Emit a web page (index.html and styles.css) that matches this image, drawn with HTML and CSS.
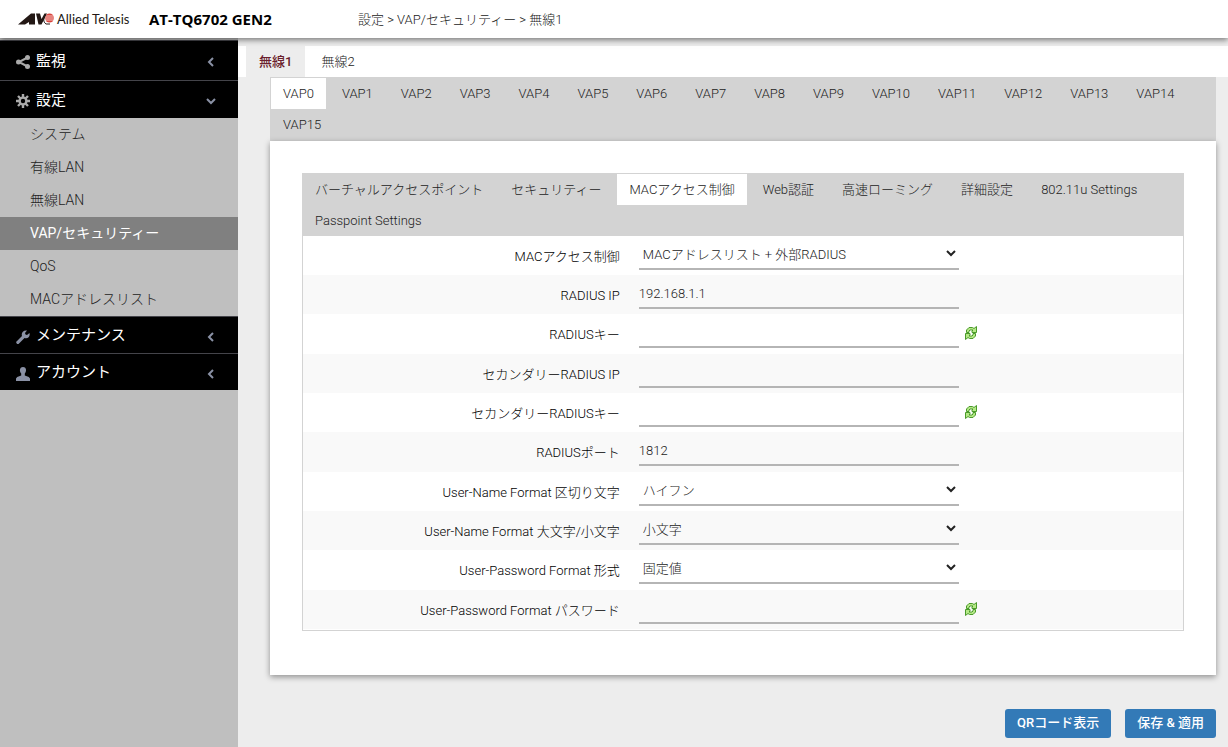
FILE: index.html
```html
<!DOCTYPE html>
<html lang="ja">
<head>
  <meta charset="UTF-8">
  <meta name="viewport" content="width=device-width, initial-scale=1.0">
  <title>AT-TQ6702 GEN2</title>
  <link rel="stylesheet" href="styles.css">
</head>
<body>
  <svg class="defs" width="0" height="0">
    <symbol id="refresh" viewBox="0 0 12 14">
      <path d="M1.500 6.500V4L4 1.500h3.500L9 2.500 11.500.500v6H7V5l1-1H5L4 5v1.500z" fill="#b4e886" stroke="#4a9a2a"/>
      <path d="M10.500 7.500V10L8 12.500H4.500L3 11.500.500 13.500v-6H5V9l-1 1h3l1-1V7.500z" fill="#b4e886" stroke="#4a9a2a"/>
    </symbol>
    <symbol id="chevron" viewBox="0 0 10 10">
      <path d="M7 1L3 5l4 4" fill="none" stroke="#8a91a5" stroke-width="2"/>
    </symbol>
  </svg>

  <header class="header">
    <div class="brand">
      <svg class="logo" width="37" height="14" viewBox="0 0 37 14">
        <path d="M0 12.500L13 1.500h4v11h-6v-2.500l-4 2.500z" fill="#231815"/>
        <path d="M18 1.500h4l1.500 5.500 3-5.500h2.500l-5.500 11h-3z" fill="#231815"/>
        <circle cx="31.500" cy="6" r="4.500" fill="#d9433b"/>
        <path d="M27 4h9M27 6h9M27 8h9" stroke="#fff" stroke-width=".7"/>
        <path d="M28 3c-3 3-3 7 0 9h4" fill="none" stroke="#231815"/>
      </svg>
      <span class="brand-name">Allied Telesis</span>
    </div>
    <h1 class="model">AT-TQ6702 GEN2</h1>
    <div class="breadcrumb">設定 &gt; VAP/セキュリティー &gt; 無線1</div>
  </header>

  <div class="wrapper">
    <nav class="sidebar">
      <a class="menu" href="#">
        <svg width="14" height="14" viewBox="0 0 14 14" fill="#aaa"><path d="M11.500 2.500L3 7l8.500 4.500" fill="none" stroke="#aaa" stroke-width="2"/><circle cx="11.500" cy="2.500" r="2.500"/><circle cx="2.500" cy="7" r="2.500"/><circle cx="11.500" cy="11.500" r="2.500"/></svg>
        <span>監視</span>
        <svg class="arrow" width="10" height="10"><use href="#chevron"/></svg>
      </a>
      <a class="menu" href="#">
        <svg width="14" height="14" viewBox="0 0 14 14"><path d="M7 0v14M0 7h14M2 2l10 10M12 2L2 12" stroke="#aaa" stroke-width="2.400"/><circle cx="7" cy="7" r="3.400" fill="#000" stroke="#aaa" stroke-width="2.400"/></svg>
        <span>設定</span>
        <svg class="arrow open" width="10" height="10"><use href="#chevron"/></svg>
      </a>
      <div class="submenu">
        <a href="#">システム</a>
        <a href="#">有線LAN</a>
        <a href="#">無線LAN</a>
        <a class="active" href="#">VAP/セキュリティー</a>
        <a href="#">QoS</a>
        <a href="#">MACアドレスリスト</a>
      </div>
      <a class="menu" href="#">
        <svg width="14" height="14" viewBox="0 0 14 14"><path d="M0 12l6-6C5 3 7 0 11 .5L9 3l.5 1.500L11 5l2.500-2c1 4-2 6-5 5l-6 6H1z" fill="#8a91a5"/></svg>
        <span>メンテナンス</span>
        <svg class="arrow" width="10" height="10"><use href="#chevron"/></svg>
      </a>
      <a class="menu" href="#">
        <svg width="14" height="14" viewBox="0 0 14 14"><path d="M7 0c4 0 3.500 5 1.800 6.500v2l4 1.500 1.200 1.500V14H0v-2.500L1.200 10l4-1.500v-2C3.500 5 3 0 7 0z" fill="#8a91a5"/></svg>
        <span>アカウント</span>
        <svg class="arrow" width="10" height="10"><use href="#chevron"/></svg>
      </a>
    </nav>

    <main class="main">
      <div class="radio-tabs">
        <a class="active" href="#">無線1</a>
        <a href="#">無線2</a>
      </div>
      <div class="content">
        <div class="tabs vap-tabs">
          <a class="active" href="#">VAP0</a>
          <a href="#">VAP1</a>
          <a href="#">VAP2</a>
          <a href="#">VAP3</a>
          <a href="#">VAP4</a>
          <a href="#">VAP5</a>
          <a href="#">VAP6</a>
          <a href="#">VAP7</a>
          <a href="#">VAP8</a>
          <a href="#">VAP9</a>
          <a href="#">VAP10</a>
          <a href="#">VAP11</a>
          <a href="#">VAP12</a>
          <a href="#">VAP13</a>
          <a href="#">VAP14</a>
          <a href="#">VAP15</a>
        </div>
        <div class="card">
          <div class="tabs">
            <a href="#">バーチャルアクセスポイント</a>
            <a href="#">セキュリティー</a>
            <a class="active" href="#">MACアクセス制御</a>
            <a href="#">Web認証</a>
            <a href="#">高速ローミング</a>
            <a href="#">詳細設定</a>
            <a href="#">802.11u Settings</a>
            <a href="#">Passpoint Settings</a>
          </div>
          <form class="form">
            <div class="row">
              <label for="macControl">MACアクセス制御</label>
              <select id="macControl"><option>MACアドレスリスト + 外部RADIUS</option></select>
            </div>
            <div class="row">
              <label for="radiusIp">RADIUS IP</label>
              <input type="text" id="radiusIp" value="192.168.1.1">
            </div>
            <div class="row">
              <label for="radiusKey">RADIUSキー</label>
              <input type="password" id="radiusKey">
              <button class="refresh" type="button" aria-label="RADIUSキー 更新"><svg width="12" height="14"><use href="#refresh"/></svg></button>
            </div>
            <div class="row">
              <label for="radiusIp2">セカンダリーRADIUS IP</label>
              <input type="text" id="radiusIp2">
            </div>
            <div class="row">
              <label for="radiusKey2">セカンダリーRADIUSキー</label>
              <input type="password" id="radiusKey2">
              <button class="refresh" type="button" aria-label="セカンダリーRADIUSキー 更新"><svg width="12" height="14"><use href="#refresh"/></svg></button>
            </div>
            <div class="row">
              <label for="radiusPort">RADIUSポート</label>
              <input type="text" id="radiusPort" value="1812">
            </div>
            <div class="row">
              <label for="separator">User-Name Format 区切り文字</label>
              <select id="separator"><option>ハイフン</option></select>
            </div>
            <div class="row">
              <label for="letterCase">User-Name Format 大文字/小文字</label>
              <select id="letterCase"><option>小文字</option></select>
            </div>
            <div class="row">
              <label for="passType">User-Password Format 形式</label>
              <select id="passType"><option>固定値</option></select>
            </div>
            <div class="row">
              <label for="password">User-Password Format パスワード</label>
              <input type="password" id="password">
              <button class="refresh" type="button" aria-label="パスワード 更新"><svg width="12" height="14"><use href="#refresh"/></svg></button>
            </div>
          </form>
        </div>
        <div class="actions">
          <button class="btn" type="button">QRコード表示</button>
          <button class="btn" type="button">保存 &amp; 適用</button>
        </div>
      </div>
    </main>
  </div>
</body>
</html>
```
FILE: styles.css
```css
* {
  box-sizing: border-box;
}

body {
  margin: 0;
  min-height: 100vh;
  display: flex;
  flex-direction: column;
  background: #ededed;
  color: #222;
  font-family: Roboto, "Noto Sans CJK JP", sans-serif;
  font-size: 13px;
  font-weight: 300;
}

a {
  color: inherit;
  text-decoration: none;
}

.defs {
  position: absolute;
}

.header {
  position: relative;
  z-index: 1;
  display: flex;
  align-items: center;
  height: 38px;
  padding-left: 18px;
  background: #fff;
  box-shadow: 0 2px 6px rgba(0, 0, 0, 0.5);
}

.brand {
  display: flex;
  align-items: center;
  width: 131px;
  gap: 2px;
}

.brand-name {
  color: #231815;
  font-family: Lato, sans-serif;
  font-size: 13px;
  font-weight: 400;
}

.model {
  width: 209px;
  margin: 0;
  color: #000;
  font-family: "Open Sans", sans-serif;
  font-size: 15px;
  font-weight: 700;
}

.breadcrumb {
  padding-bottom: 2px;
}

.wrapper {
  flex: 1;
  display: flex;
}

.sidebar {
  flex: 0 0 238px;
  padding-top: 2px;
  background: #bfbfbf;
}

.menu {
  display: flex;
  align-items: center;
  height: 38px;
  padding: 0 22px 0 16px;
  gap: 6px;
  border-top: 1px solid #44444a;
  background: #000;
  color: #fff;
  font-size: 15px;
  font-weight: 400;
}

.menu:first-child {
  height: 40px;
}

.submenu ~ .menu {
  height: 37px;
}

.menu span {
  padding-bottom: 3px;
}

.menu svg {
  margin-top: 3px;
}

.menu .arrow {
  margin-left: auto;
}

.arrow.open {
  transform: rotate(-90deg);
}

.submenu a {
  display: block;
  padding-left: 30px;
  font-size: 14px;
  line-height: 33px;
}

.submenu a.active {
  background: #808080;
  color: #fff;
  font-weight: 400;
}

.main {
  flex: 1;
  padding-top: 8px;
}

.radio-tabs {
  display: flex;
  padding-left: 8px;
  background: #fff;
  line-height: 31px;
}

.radio-tabs a {
  padding: 0 13px;
}

.radio-tabs a + a {
  margin-left: 3px;
}

.radio-tabs a.active {
  background: #ededed;
  color: #6b1f2e;
  font-weight: 500;
}

.content {
  padding: 0 12px 0 32px;
}

.tabs {
  display: flex;
  flex-wrap: wrap;
  column-gap: 4px;
  padding: 1px 1px 0;
  background: #d3d3d3;
  line-height: 31px;
}

.vap-tabs {
  padding-bottom: 1px;
}

.tabs a {
  padding: 0 12px;
}

.tabs a.active {
  background: #fff;
}

.card {
  padding: 32px 32px 44px;
  background: #fff;
  box-shadow: 0 2px 6px rgba(0, 0, 0, 0.4);
}

.form {
  padding-bottom: 1px;
  border: 1px solid #d3d3d3;
  border-top: 0;
}

.row {
  display: flex;
  align-items: flex-start;
  height: 39px;
}

.row:nth-child(3n) {
  height: 40px;
}

.row:nth-child(even) {
  background: #f9f9f9;
}

.row label {
  flex: 0 0 36%;
  margin-right: 19px;
  color: #000;
  line-height: 41px;
  text-align: right;
}

.row input,
.row select {
  width: 320px;
  height: 34px;
  padding: 4px 0 0;
  border: 0;
  border-bottom: 2px solid #b5b5b5;
  border-radius: 0;
  background: transparent;
  color: #222;
  font: inherit;
}

.refresh {
  margin: 12px 0 0 6px;
  padding: 0;
  border: 0;
  background: none;
  line-height: 0;
}

.actions {
  display: flex;
  justify-content: flex-end;
  gap: 14px;
  padding: 34px 0 9px;
}

.btn {
  height: 29px;
  padding: 0 12px 4px;
  border: 0;
  border-radius: 3px;
  background: #337ab7;
  color: #fff;
  font: inherit;
  font-weight: 500;
}
```
